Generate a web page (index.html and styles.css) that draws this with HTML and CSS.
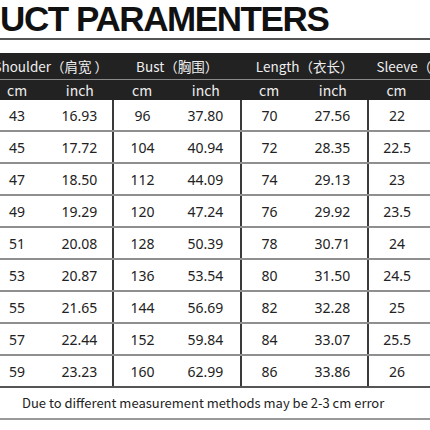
FILE: index.html
```html
<!DOCTYPE html>
<html>
<head>
<meta charset="utf-8">
<link rel="stylesheet" href="styles.css">
</head>
<body>
<div class="page">
  <div class="title">UCT PARAMENTERS</div>
  <table class="sizes">
    <colgroup>
      <col class="c58"><col class="c67">
      <col class="c57"><col class="c70">
      <col class="c56"><col class="c71">
      <col class="c56"><col class="c71">
    </colgroup>
    <thead>
      <tr class="h1">
        <th colspan="2">Shoulder（肩宽 ）</th>
        <th colspan="2">Bust（胸围）</th>
        <th colspan="2">Length（衣长）</th>
        <th colspan="2" class="sl">Sleeve（袖长）</th>
      </tr>
      <tr class="h2">
        <th>cm</th><th>inch</th>
        <th>cm</th><th>inch</th>
        <th>cm</th><th>inch</th>
        <th>cm</th><th>inch</th>
      </tr>
    </thead>
    <tbody>
      <tr><td>43</td><td>16.93</td><td class="g">96</td><td>37.80</td><td class="g">70</td><td>27.56</td><td class="g">22</td><td>8.66</td></tr>
      <tr><td>45</td><td>17.72</td><td class="g">104</td><td>40.94</td><td class="g">72</td><td>28.35</td><td class="g">22.5</td><td>8.86</td></tr>
      <tr><td>47</td><td>18.50</td><td class="g">112</td><td>44.09</td><td class="g">74</td><td>29.13</td><td class="g">23</td><td>9.06</td></tr>
      <tr><td>49</td><td>19.29</td><td class="g">120</td><td>47.24</td><td class="g">76</td><td>29.92</td><td class="g">23.5</td><td>9.25</td></tr>
      <tr><td>51</td><td>20.08</td><td class="g">128</td><td>50.39</td><td class="g">78</td><td>30.71</td><td class="g">24</td><td>9.45</td></tr>
      <tr><td>53</td><td>20.87</td><td class="g">136</td><td>53.54</td><td class="g">80</td><td>31.50</td><td class="g">24.5</td><td>9.65</td></tr>
      <tr><td>55</td><td>21.65</td><td class="g">144</td><td>56.69</td><td class="g">82</td><td>32.28</td><td class="g">25</td><td>9.84</td></tr>
      <tr><td>57</td><td>22.44</td><td class="g">152</td><td>59.84</td><td class="g">84</td><td>33.07</td><td class="g">25.5</td><td>10.04</td></tr>
      <tr class="last"><td>59</td><td>23.23</td><td class="g">160</td><td>62.99</td><td class="g">86</td><td>33.86</td><td class="g">26</td><td>10.24</td></tr>
    </tbody>
  </table>
  <div class="note">Due to different measurement methods may be 2-3 cm error</div>
</div>
</body>
</html>
```

FILE: styles.css
```css
html, body {
  margin: 0;
  padding: 0;
  background: #fff;
}
body {
  width: 430px;
  height: 430px;
  overflow: hidden;
}
.page {
  width: 430px;
  height: 430px;
  overflow: hidden;
  display: flex;
  flex-direction: column;
}
.title {
  height: 38px;
  line-height: 38px;
  font-family: "Liberation Sans", sans-serif;
  font-weight: bold;
  font-size: 35px;
  letter-spacing: -1.4px;
  color: #111;
  white-space: nowrap;
  border-bottom: 2px solid #555;
  flex: none;
}
.sizes {
  margin-top: 13px;
  margin-left: -12px;
  width: 508px;
  border-collapse: collapse;
  table-layout: fixed;
  flex: none;
}
.c58 { width: 58px; }
.c67 { width: 67px; }
.c57 { width: 57px; }
.c70 { width: 70px; }
.c56 { width: 56px; }
.c71 { width: 71px; }
.sizes th {
  background: #222;
  color: #eee;
  font-family: "Noto Sans CJK SC", sans-serif;
  font-weight: normal;
  font-size: 13.5px;
  padding: 0;
  white-space: nowrap;
  text-align: center;
}
.sizes th.sl {
  text-align: left;
  padding-left: 8px;
}
.h1 th {
  height: 26px;
}
.h2 th {
  height: 19px;
  font-size: 14px;
  border-top: 1px solid #8a8a8a;
}
.sizes td {
  height: 30px;
  padding: 0;
  text-align: center;
  font-family: "Noto Sans", sans-serif;
  font-size: 14px;
  color: #222;
  border-bottom: 2px solid #8f8f8f;
}
.sizes td.g {
  border-left: 2px solid #3a3a3a;
}
.sizes tr.last td {
  border-bottom: 2px solid #555;
}
.note {
  height: 30px;
  line-height: 30px;
  padding-left: 22px;
  font-family: "Noto Sans CJK SC", sans-serif;
  font-size: 13px;
  color: #222;
  white-space: nowrap;
  border-bottom: 2px solid #999;
  flex: none;
}
```
